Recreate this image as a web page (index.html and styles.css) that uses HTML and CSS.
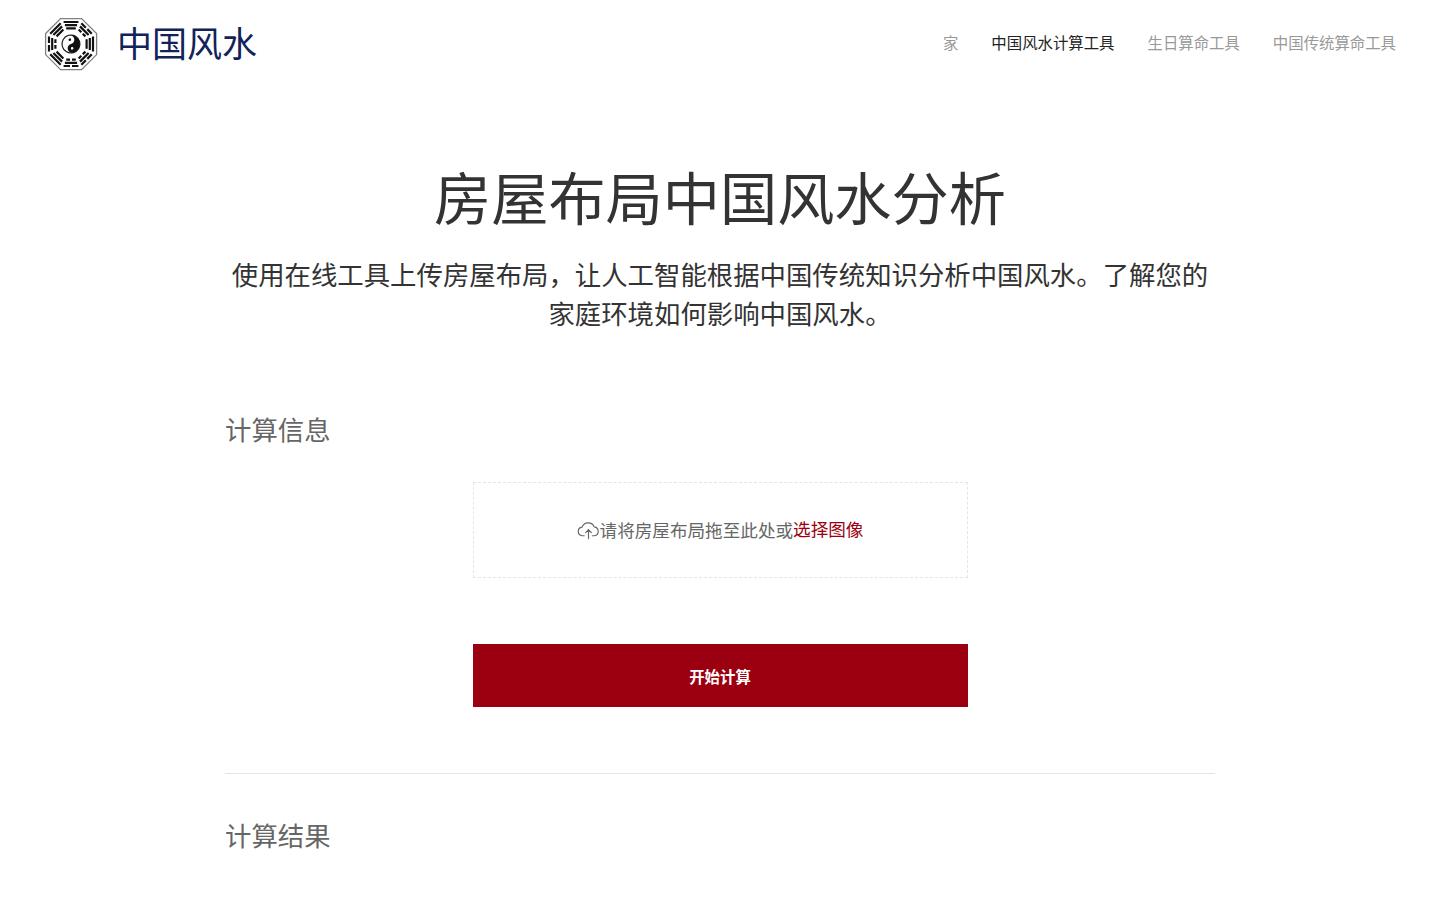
FILE: index.html
```html
<!DOCTYPE html>
<html lang="zh-CN">
<head>
  <meta charset="UTF-8">
  <title>房屋布局中国风水分析</title>
  <link rel="stylesheet" href="styles.css">
</head>
<body>
  <header class="site-header">
    <a class="brand" href="#">
      <svg class="brand-icon" viewBox="0 0 54 54" width="54" height="54">
        <defs>
          <g id="tri">
            <path d="M19.6 5h14.8M20.9 8.200h12.200M22.200 11.400h9.600" fill="none" stroke="#111" stroke-width="2.200"/>
          </g>
          <g id="tri-b">
            <path d="M19.6 5h6.400M28 5h6.400M20.900 8.200h12.200M22.200 11.400h3.800M28 11.400h3.800" fill="none" stroke="#111" stroke-width="2.200"/>
          </g>
        </defs>
        <polygon points="16.600,1.600 37.600,1.600 52.600,16.600 52.600,37.600 37.600,52.600 16.600,52.600 1.600,37.600 1.600,16.600" fill="#fff" stroke="#808080" stroke-width="1.300"/>
        <use href="#tri"/>
        <use href="#tri-b" transform="rotate(45 27 27)"/>
        <use href="#tri" transform="rotate(90 27 27)"/>
        <use href="#tri-b" transform="rotate(135 27 27)"/>
        <use href="#tri-b" transform="rotate(180 27 27)"/>
        <use href="#tri" transform="rotate(225 27 27)"/>
        <use href="#tri-b" transform="rotate(270 27 27)"/>
        <use href="#tri" transform="rotate(315 27 27)"/>
        <g transform="rotate(-15 27 27)">
          <circle cx="27" cy="27" r="9" fill="#fff" stroke="#111" stroke-width="1.100"/>
          <path d="M27 18a9 9 0 0 1 0 18a4.500 4.500 0 0 1 0-9a4.500 4.500 0 0 0 0-9z" fill="#111"/>
          <circle cx="27" cy="22.500" r="1.300" fill="#111"/>
          <circle cx="27" cy="31.500" r="1.300" fill="#fff"/>
        </g>
      </svg>
      <span class="brand-name">中国风水</span>
    </a>
    <nav class="site-nav">
      <a href="#">家</a>
      <a class="active" href="#">中国风水计算工具</a>
      <a href="#">生日算命工具</a>
      <a href="#">中国传统算命工具</a>
    </nav>
  </header>

  <main class="container">
    <section class="hero">
      <h1>房屋布局中国风水分析</h1>
      <p>使用在线工具上传房屋布局，让人工智能根据中国传统知识分析中国风水。了解您的家庭环境如何影响中国风水。</p>
    </section>

    <section class="calc">
      <h2>计算信息</h2>
      <div class="upload">
        <svg class="upload-icon" viewBox="0 0 24 24" width="24" height="24" fill="none" stroke="#666" stroke-width="1.200" stroke-linecap="round" stroke-linejoin="round">
          <path d="M7.500 17.500H5.500a4.500 4.500 0 0 1-.2-8.960A6.800 6.800 0 0 1 18 8.200a4.700 4.700 0 0 1 .2 9.300h-2.200"/>
          <path d="M12 20.500v-9M9 14.200l3-3 3 3"/>
        </svg>
        <span class="upload-text">请将房屋布局拖至此处或</span><a href="#">选择图像</a>
      </div>
      <button class="start-btn" type="button">开始计算</button>
    </section>

    <section class="result">
      <h2>计算结果</h2>
    </section>
  </main>
</body>
</html>
```

FILE: styles.css
```css
body {
  font-family: "Noto Sans CJK SC", "Noto Sans", sans-serif;
  background-color: #fff;
  color: #333;
  margin: 0;
  padding: 0;
}

a {
  text-decoration: none;
}

.site-header {
  display: flex;
  justify-content: space-between;
  align-items: center;
  height: 88px;
  padding: 0 44px;
}

.brand {
  display: flex;
  align-items: center;
  gap: 19px;
}

.brand-name {
  padding-bottom: 4px;
  font-size: 35px;
  line-height: 44px;
  color: #12235a;
}

.site-nav {
  display: flex;
  gap: 33px;
  padding-bottom: 4px;
}

.site-nav a {
  font-size: 15.4px;
  line-height: 22px;
  color: #999;
}

.site-nav a.active {
  color: #222;
}

.container {
  width: 990px;
  margin: 0 auto;
}

.hero {
  padding-top: 67px;
  text-align: center;
}

.hero h1 {
  margin: 0;
  font-size: 57.2px;
  line-height: 80px;
  font-weight: 400;
  color: #333;
}

.hero p {
  margin: 19px 0 0;
  font-size: 26.4px;
  line-height: 39px;
  color: #333;
}

.calc {
  padding-top: 77px;
  padding-bottom: 66px;
  border-bottom: 1px solid #e5e5e5;
}

h2 {
  margin: 0;
  font-size: 26.4px;
  line-height: 40px;
  font-weight: 400;
  color: #666;
}

.upload {
  display: flex;
  justify-content: center;
  align-items: center;
  box-sizing: border-box;
  width: 495px;
  height: 96px;
  margin: 33px auto 0;
  border: 1px dashed #e5e5e5;
  font-size: 17.6px;
  color: #666;
}

.upload-text {
  padding-bottom: 2px;
}

.upload a {
  padding-bottom: 4px;
  color: #9b0011;
}

.upload-icon {
  width: 23px;
  height: 23px;
}

.start-btn {
  display: block;
  width: 495px;
  height: 63px;
  margin: 66px auto 0;
  border: none;
  background-color: #9b0011;
  color: #fff;
  font-family: inherit;
  font-size: 15.4px;
  font-weight: 700;
}

.result {
  padding-top: 41px;
}
```
